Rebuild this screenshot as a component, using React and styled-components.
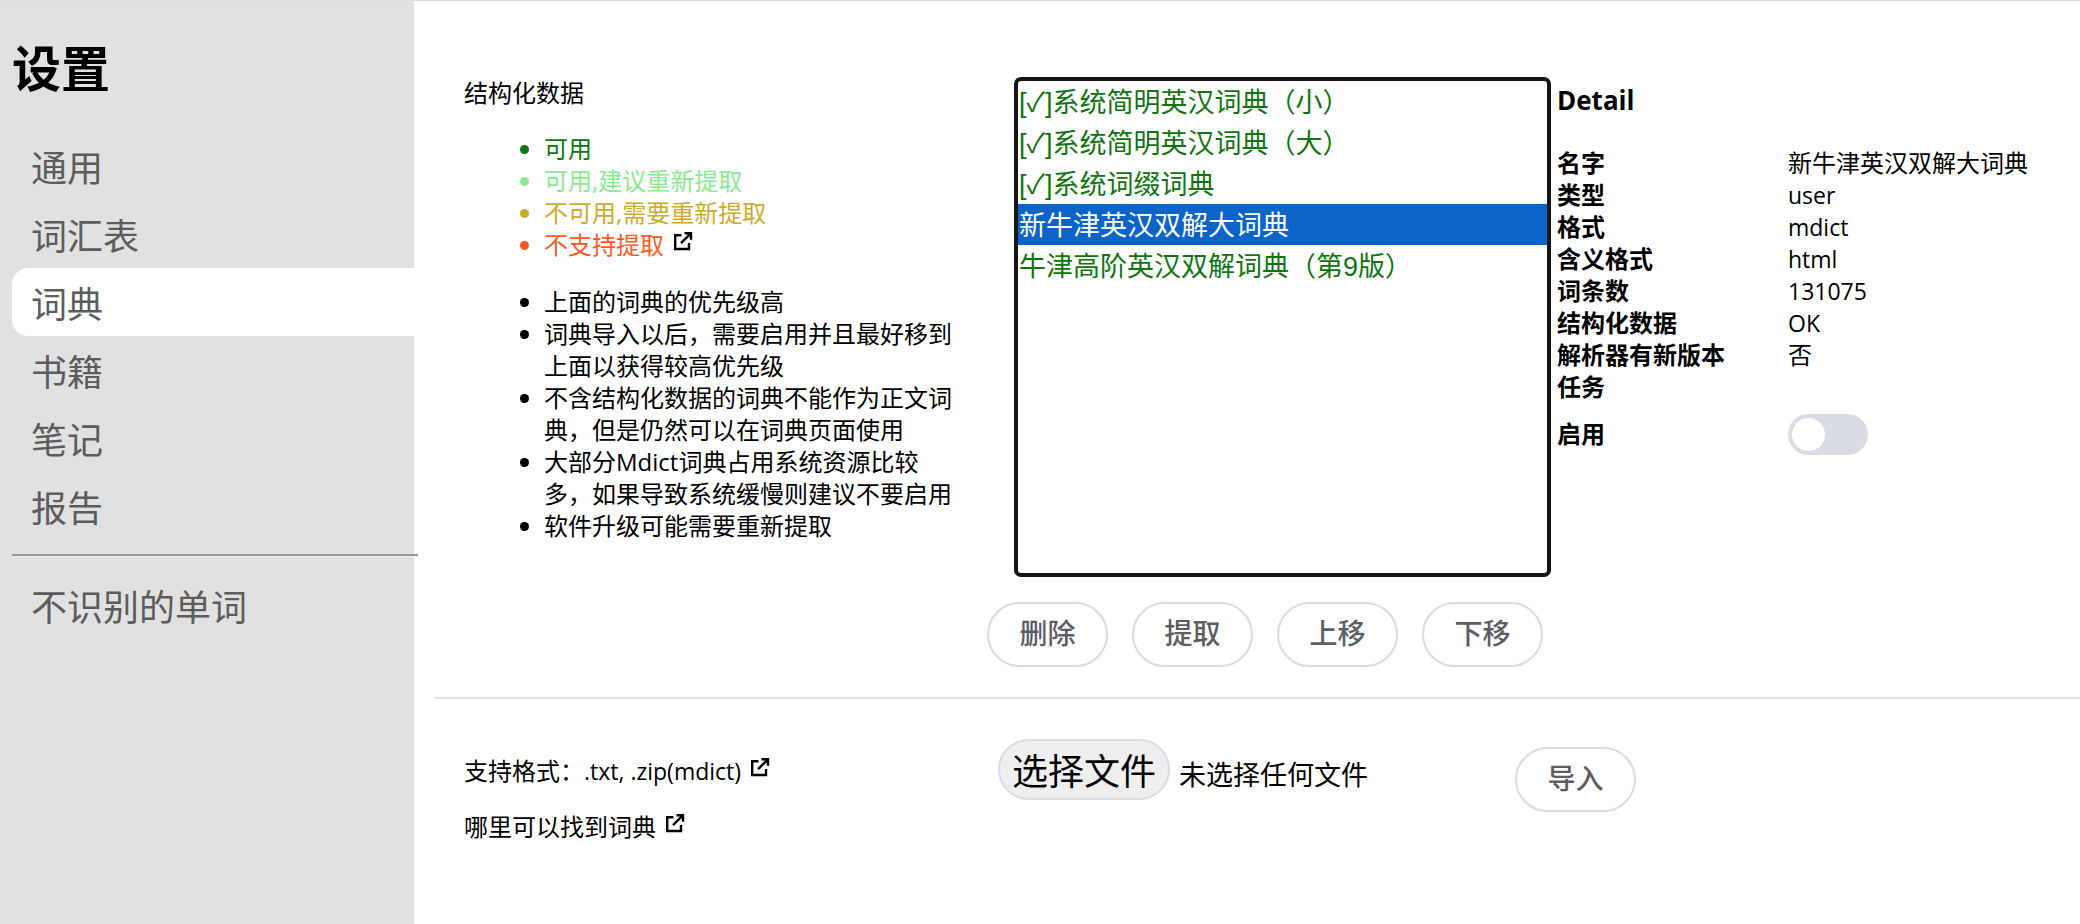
import React, { useState } from "react";
import styled, { createGlobalStyle, css } from "styled-components";

const uiFont = `"Open Sans", "Noto Sans CJK SC", sans-serif`;
const controlFont = `"Liberation Sans", "Noto Sans CJK SC", sans-serif`;

const GlobalStyle = createGlobalStyle`
  *, *::before, *::after { box-sizing: border-box; }
  body {
    margin: 0;
    background: #fff;
    color: #000;
    font-family: ${uiFont};
    font-size: 24px;
    line-height: 32px;
  }
`;

const Page = styled.div`
  display: flex;
  min-height: 100vh;
  border-top: 1px solid #dcdcdc;
`;

const Sidebar = styled.aside`
  flex: none;
  width: 414px;
  padding: 31px 0 32px 12px;
  background: #e1e1e1;
`;

const Title = styled.h1`
  margin: 0 0 28px;
  font-size: 49px;
  line-height: 72px;
`;

const NavLink = styled.a`
  display: block;
  padding: 13px 19px 7px;
  border-radius: 16px 0 0 16px;
  color: #5c5c5c;
  font-size: 36px;
  line-height: 48px;
  text-decoration: none;
  ${(p) => p.$active && css`background: #fff;`}
`;

const NavRule = styled.hr`
  margin: 14px -4px 14px 0;
  border: 0;
  border-top: 2px solid #9a9a9a;
  border-bottom: 1px solid #eeeeee;
`;

const Main = styled.main`
  flex: 1;
  min-width: 0;
  padding-left: 20px;
`;

const Dictionaries = styled.section`
  display: grid;
  grid-template-columns: minmax(0, 523fr) minmax(0, 570fr) minmax(0, 523fr);
  padding: 76px 0 30px 30px;
  border-bottom: 2px solid #e0e0e0;
`;

const Notes = styled.div`
  padding-right: 27px;
  padding-left: 80px;
`;

const NotesTitle = styled.p`
  margin: 0 0 24px -80px;
`;

const BulletList = styled.ul`
  margin: 0 0 25px;
  padding: 0;
`;

const Bullet = styled.li`
  color: ${(p) => p.$color || "inherit"};
`;

const Latin = styled.span`
  font-size: 23px;
`;

const IconLink = styled.a`
  margin-left: 9px;
  color: #000;
  svg { vertical-align: 3px; }
`;

const DictColumn = styled.div`
  padding-right: 6px;
`;

const DictSelect = styled.select`
  display: block;
  width: calc(100% - 27px);
  height: 500px;
  margin: 0 0 25px 27px;
  padding: 0;
  border: 4px solid #151515;
  border-radius: 7px;
  outline: 0;
  background: #fff;
  font-family: ${controlFont};
  font-size: 27px;
  overflow: hidden;
`;

const DictOption = styled.option`
  min-height: 41px;
  padding: 0 1px;
  color: #107510;
  line-height: 40px;
  &:checked {
    background: #0c63c8 linear-gradient(#0c63c8, #0c63c8);
    -webkit-text-fill-color: #fff;
  }
`;

const ButtonRow = styled.div`
  display: flex;
  gap: 24px;
`;

const PillButton = styled.button`
  flex: none;
  align-self: start;
  width: 121px;
  height: 65px;
  padding: 0 0 5px;
  border: 2px solid #d9dce4;
  border-radius: 33px;
  background: #fff;
  color: #5c5e62;
  font-family: ${controlFont};
  font-size: 28px;
  font-weight: 500;
  cursor: pointer;
`;

const Detail = styled.div`
  min-width: 0;
`;

const DetailTitle = styled.h2`
  margin: 0 0 24px;
  font-size: 26px;
  line-height: 46px;
`;

const DetailTable = styled.table`
  width: 100%;
  border-collapse: collapse;
  table-layout: fixed;
  th, td { padding: 0; text-align: left; white-space: nowrap; }
  th { width: 231px; font-weight: 700; }
`;

const SwitchCell = styled.td`
  height: 62px;
  vertical-align: middle;
`;

const Switch = styled.input`
  display: block;
  appearance: none;
  width: 80px;
  height: 41px;
  margin: 0;
  padding: 4px;
  border-radius: 21px;
  background: #d9dce4;
  cursor: pointer;
  &::before {
    content: "";
    display: block;
    width: 33px;
    height: 33px;
    border-radius: 50%;
    background: #fff;
  }
  &:checked { background: #0c63c8; }
  &:checked::before { margin-left: auto; }
`;

const ImportArea = styled.section`
  display: grid;
  grid-template-columns: minmax(0, 523fr) minmax(0, 528fr) minmax(0, 565fr);
  padding: 40px 0 32px 30px;
`;

const Help = styled.div`
  padding-top: 16px;
`;

const HelpLine = styled.p`
  margin: 0 0 24px;
`;

const FileField = styled.div`
  display: flex;
  align-items: center;
  align-self: start;
  gap: 9px;
  padding-left: 11px;
  font-family: ${controlFont};
  font-size: 27px;
`;

const HiddenFile = styled.input`
  position: absolute;
  width: 1px;
  height: 1px;
  opacity: 0;
`;

const FileButton = styled.label`
  padding: 7px 12px 0;
  border: 2px solid #d9dce4;
  border-radius: 31px;
  background: #efefef;
  font-size: 36px;
  line-height: 50px;
  cursor: pointer;
`;

const FileName = styled.span`
  padding-top: 13px;
`;

const ImportButton = styled(PillButton)`
  margin-top: 8px;
`;

function OpenLink({ label }) {
  return (
    <IconLink href="#" aria-label={label}>
      <svg width="20" height="20" viewBox="0 0 20 20" fill="none" stroke="currentColor" strokeWidth="2.4">
        <path d="M8.5 4.2H2.2V18H16V12" />
        <path d="M11.5 2.2H18V8.7M18 2.2L8 12.2" />
      </svg>
    </IconLink>
  );
}

/* Latin words sit one size below the Chinese text around them. */
function MixedText({ text }) {
  return text
    .split(/([\x20-\x7e]{2,})/)
    .filter(Boolean)
    .map((part, i) => (/^[\x20-\x7e]/.test(part) ? <Latin key={i}>{part}</Latin> : part));
}

const navItems = ["通用", "词汇表", "词典", "书籍", "笔记", "报告"];

const statuses = [
  ["可用", "#107510"],
  ["可用,建议重新提取", "#8cea8f"],
  ["不可用,需要重新提取", "#ccad2b"],
  ["不支持提取", "#ff5a26"],
];

const tips = [
  "上面的词典的优先级高",
  "词典导入以后，需要启用并且最好移到上面以获得较高优先级",
  "不含结构化数据的词典不能作为正文词典，但是仍然可以在词典页面使用",
  "大部分Mdict词典占用系统资源比较多，如果导致系统缓慢则建议不要启用",
  "软件升级可能需要重新提取",
];

const dictionaries = [
  "[✓]系统简明英汉词典（小）",
  "[✓]系统简明英汉词典（大）",
  "[✓]系统词缀词典",
  "新牛津英汉双解大词典",
  "牛津高阶英汉双解词典（第9版）",
];

const details = [
  ["名字", "新牛津英汉双解大词典"],
  ["类型", "user"],
  ["格式", "mdict"],
  ["含义格式", "html"],
  ["词条数", "131075"],
  ["结构化数据", "OK"],
  ["解析器有新版本", "否"],
  ["任务", ""],
];

const actions = ["删除", "提取", "上移", "下移"];

export default function App() {
  const [selected, setSelected] = useState(dictionaries[3]);
  return (
    <>
      <GlobalStyle />
      <Page>
        <Sidebar>
          <Title>设置</Title>
          <nav>
            {navItems.map((item) => (
              <NavLink key={item} href="#" $active={item === "词典"}>{item}</NavLink>
            ))}
            <NavRule />
            <NavLink href="#">不识别的单词</NavLink>
          </nav>
        </Sidebar>
        <Main>
          <Dictionaries>
            <Notes>
              <NotesTitle>结构化数据</NotesTitle>
              <BulletList>
                {statuses.map(([text, color], i) => (
                  <Bullet key={text} $color={color}>
                    {text}
                    {i === 3 && <OpenLink label="不支持提取" />}
                  </Bullet>
                ))}
              </BulletList>
              <BulletList>
                {tips.map((tip) => <Bullet key={tip}>{tip}</Bullet>)}
              </BulletList>
            </Notes>
            <DictColumn>
              <DictSelect
                size={12}
                aria-label="词典"
                value={selected}
                onChange={(e) => setSelected(e.target.value)}
              >
                {dictionaries.map((name) => (
                  <DictOption key={name} value={name}>{name}</DictOption>
                ))}
              </DictSelect>
              <ButtonRow>
                {actions.map((name) => <PillButton key={name} type="button">{name}</PillButton>)}
              </ButtonRow>
            </DictColumn>
            <Detail>
              <DetailTitle>Detail</DetailTitle>
              <DetailTable>
                <tbody>
                  {details.map(([name, value]) => (
                    <tr key={name}>
                      <th scope="row">{name}</th>
                      <td><MixedText text={value} /></td>
                    </tr>
                  ))}
                  <tr>
                    <th scope="row"><label htmlFor="enabled">启用</label></th>
                    <SwitchCell><Switch id="enabled" type="checkbox" role="switch" /></SwitchCell>
                  </tr>
                </tbody>
              </DetailTable>
            </Detail>
          </Dictionaries>
          <ImportArea>
            <Help>
              <HelpLine><MixedText text="支持格式：.txt, .zip(mdict)" /><OpenLink label="支持格式" /></HelpLine>
              <HelpLine>哪里可以找到词典<OpenLink label="哪里可以找到词典" /></HelpLine>
            </Help>
            <FileField>
              <HiddenFile id="dict-file" type="file" />
              <FileButton htmlFor="dict-file">选择文件</FileButton>
              <FileName>未选择任何文件</FileName>
            </FileField>
            <ImportButton type="button">导入</ImportButton>
          </ImportArea>
        </Main>
      </Page>
    </>
  );
}
